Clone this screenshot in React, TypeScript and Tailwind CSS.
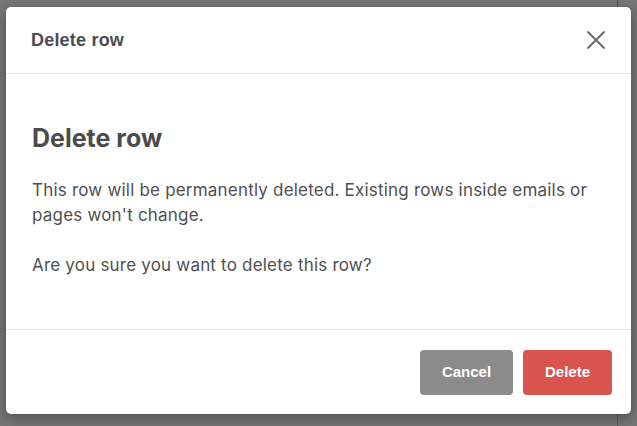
const App = () => {
  return (
    <div className="relative w-full h-[426px] bg-[#767676] overflow-hidden pt-[7px] pl-[6px]">
      {/* page behind the overlay: a thin scrollbar edge */}
      <div className="absolute top-0 bottom-0 left-[617px] w-px bg-[#5a5a5a]" />

      <div className="relative flex flex-col w-[625px] h-[407px] bg-white rounded-[5px] shadow-[0_4px_14px_rgba(0,0,0,0.35)]">
        <div className="flex items-center justify-between h-[67px] pl-[25px] pr-[26px] border-b border-[#e6e6e6]">
          <h3 className="font-['Liberation_Sans',Arial,sans-serif] text-[18px] font-bold text-[#4a4d52] tracking-[0.2px]">
            Delete row
          </h3>
          <button className="text-[#666] p-0">
            <svg width="18" height="18" viewBox="0 0 18 18" fill="none" stroke="currentColor" strokeWidth="1.8" strokeLinecap="round">
              <path d="M1 1L17 17M17 1L1 17" />
            </svg>
          </button>
        </div>

        <div className="flex-1 px-[26px] pt-[48px] font-['Inter',sans-serif]">
          <h2 className="text-[25px] leading-[32px] font-bold text-[#4b4b4b]">Delete row</h2>
          <p className="mt-[24px] text-[17px] leading-[25px] tracking-[0.2px] text-[#505050]">
            This row will be permanently deleted. Existing rows inside emails or pages won't change.
            <br />
            <br />
            Are you sure you want to delete this row?
          </p>
        </div>

        <div className="flex justify-end gap-[10px] pt-[20px] pb-[19px] pr-[19px] border-t border-[#e6e6e6] font-['Liberation_Sans',Arial,sans-serif]">
          <button className="w-[93px] h-[45px] rounded-[4px] bg-[#8b8b8b] text-white text-[15px] font-bold">
            Cancel
          </button>
          <button className="w-[89px] h-[45px] rounded-[4px] bg-[#d9534f] text-white text-[15px] font-bold">
            Delete
          </button>
        </div>
      </div>
    </div>
  );
};

export default App;
